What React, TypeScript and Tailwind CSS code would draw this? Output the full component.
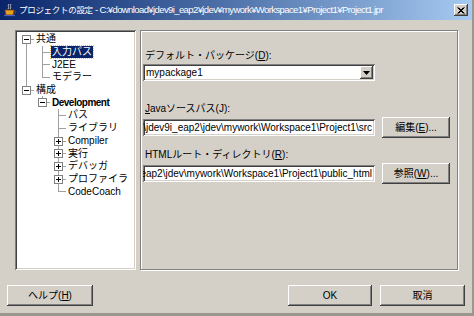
import React from "react";

type TreeNode = {
  label: string;
  level: number;
  box?: "+" | "-";
  bold?: boolean;
  selected?: boolean;
  lines: boolean[];
  first?: boolean;
  last?: boolean;
};

const TREE: TreeNode[] = [
  { label: "共通", level: 0, box: "-", lines: [], first: true },
  { label: "入力パス", level: 1, lines: [true], selected: true },
  { label: "J2EE", level: 1, lines: [true] },
  { label: "モデラー", level: 1, lines: [true], last: true },
  { label: "構成", level: 0, box: "-", lines: [], last: true },
  { label: "Development", level: 1, box: "-", bold: true, lines: [false], last: true },
  { label: "パス", level: 2, lines: [false, false] },
  { label: "ライブラリ", level: 2, lines: [false, false] },
  { label: "Compiler", level: 2, box: "+", lines: [false, false] },
  { label: "実行", level: 2, box: "+", lines: [false, false] },
  { label: "デバッガ", level: 2, box: "+", lines: [false, false] },
  { label: "プロファイラ", level: 2, box: "+", lines: [false, false] },
  { label: "CodeCoach", level: 2, lines: [false, false], last: true },
];

const SUNKEN =
  "shadow-[inset_1px_1px_0_#808080,inset_-1px_-1px_0_#ffffff,inset_2px_2px_0_#404040,inset_-2px_-2px_0_#d4d0c8]";
const RAISED =
  "shadow-[inset_-1px_-1px_0_#404040,inset_1px_1px_0_#ffffff,inset_-2px_-2px_0_#808080,inset_2px_2px_0_#d4d0c8]";

export default function App() {
  return (
    <div
      className="flex h-[316px] w-[474px] flex-col overflow-hidden border-b-[3px] border-r-[2px] border-[#9a978f] bg-[#d4d0c8] text-[10px] text-black"
      style={{ fontFamily: '"Liberation Sans", "Noto Sans CJK JP", sans-serif' }}
    >
      <TitleBar />

      <div className="ml-[15px] mt-[10px] flex h-[240px] gap-[4px]">
        <div className={`w-[121px] bg-white pl-[1px] pt-[3px] ${SUNKEN}`}>
          <div className="pl-[2px]">
            {TREE.map((n) => (
              <TreeRow key={n.label} node={n} />
            ))}
          </div>
        </div>

        <div className="w-[318px] border border-[#808080] px-[2px] pt-[19px] shadow-[inset_1px_1px_0_#ffffff,1px_1px_0_#ffffff]">
          <Label>
            デフォルト・パッケージ(<u>D</u>):
          </Label>
          <div className={`mt-[2px] flex h-[17px] w-[232px] items-center bg-white pl-[3px] pr-[2px] ${SUNKEN}`}>
            <span className="flex-1">mypackage1</span>
            <div className={`flex h-[13px] w-[13px] items-center justify-center bg-[#d4d0c8] ${RAISED}`}>
              <svg width="7" height="4" viewBox="0 0 7 4">
                <path d="M0 0h7L3.5 4z" fill="#000" />
              </svg>
            </div>
          </div>

          <Label className="mt-[22px]">
            <u>J</u>avaソースパス(J):
          </Label>
          <FieldRow
            value="C:\download\jdev9i_eap2\jdev\mywork\Workspace1\Project1\src"
            button={
              <>
                編集(<u>E</u>)...
              </>
            }
          />

          <Label className="mt-[12px]">
            HTMLルート・ディレクトリ(<u>R</u>):
          </Label>
          <FieldRow
            value="C:\download\jdev9i_eap2\jdev\mywork\Workspace1\Project1\public_html"
            button={
              <>
                参照(<u>W</u>)...
              </>
            }
          />
        </div>
      </div>

      <div className="mt-[15px] flex px-[7px]">
        <Button className="w-[86px]">
          ヘルプ(<u>H</u>)
        </Button>
        <div className="flex-1" />
        <Button className="w-[84px]">OK</Button>
        <Button className="ml-[8px] w-[85px]">取消</Button>
      </div>
    </div>
  );
}

function TitleBar() {
  return (
    <div className="flex h-[20px] items-center bg-gradient-to-r from-[#0a246a] to-[#a6caf0] pl-[3px] pr-[4px] text-white">
      <svg width="14" height="14" viewBox="0 0 14 14" className="shrink-0">
        <path d="M6 1c-2 2 1 3-1 5M8 1c-2 2 1 3-1 5" stroke="#c0c0c0" fill="none" />
        <path d="M2 7h9l-1 5H3z" fill="#e8a020" stroke="#7a4a00" strokeWidth="0.8" />
        <path d="M11 8h1.5v2H10.5" stroke="#7a4a00" fill="none" strokeWidth="0.8" />
        <path d="M1 12.5h11" stroke="#5060c0" strokeWidth="1.2" />
      </svg>
      <span className="ml-[2px] whitespace-nowrap text-[8.5px] tracking-[-0.3px]">
        プロジェクトの設定{" "}
        <span className="text-[9.5px] tracking-[-0.6px]">
          - C:¥download¥jdev9i_eap2¥jdev¥mywork¥Workspace1¥Project1¥Project1.jpr
        </span>
      </span>
      <div className="flex-1" />
      <div className={`flex h-[12px] w-[14px] shrink-0 items-center justify-center bg-[#d4d0c8] ${RAISED}`}>
        <svg width="8" height="7" viewBox="0 0 8 7">
          <path d="M0.5 0.5l6 6M6.5 0.5l-6 6M1.5 0.5l6 6M7.5 0.5l-6 6" stroke="#000" strokeWidth="1" />
        </svg>
      </div>
    </div>
  );
}

function TreeRow({ node }: { node: TreeNode }) {
  const cells = [];
  for (let i = 0; i < node.level; i++) {
    cells.push(
      <div key={i} className="relative h-full w-[16px] shrink-0">
        {node.lines[i] && <span className="absolute bottom-0 left-[8px] top-0 w-px bg-[#a0a0a0]" />}
      </div>
    );
  }
  cells.push(
    <div key="self" className="relative h-full w-[16px] shrink-0">
      {!node.first && <span className="absolute left-[8px] top-0 h-[6px] w-px bg-[#a0a0a0]" />}
      {!node.last && <span className="absolute bottom-0 left-[8px] top-[6px] w-px bg-[#a0a0a0]" />}
      <span className="absolute left-[8px] right-0 top-[6px] h-px bg-[#a0a0a0]" />
      {node.box && (
        <span className="absolute left-[4px] top-[2px] flex h-[9px] w-[9px] items-center justify-center border border-[#808080] bg-white">
          <span className="absolute h-px w-[5px] bg-black" />
          {node.box === "+" && <span className="absolute h-[5px] w-px bg-black" />}
        </span>
      )}
    </div>
  );
  return (
    <div className="flex h-[12.7px] items-center">
      {cells}
      <span
        className={`ml-[1px] whitespace-nowrap px-[1px] leading-[12px] ${node.bold ? "font-bold tracking-[-0.5px]" : ""} ${
          node.selected ? "bg-[#0a246a] text-white outline outline-1 outline-dotted outline-[#f0c060]" : ""
        }`}
      >
        {node.label}
      </span>
    </div>
  );
}

function Label({ children, className = "" }: { children: React.ReactNode; className?: string }) {
  return <div className={`ml-[2px] h-[12px] leading-[12px] ${className}`}>{children}</div>;
}

function FieldRow({ value, button }: { value: string; button: React.ReactNode }) {
  return (
    <div className="mt-[2px] flex h-[20px] items-center gap-[7px]">
      <div className={`flex h-[17px] w-[232px] items-center justify-end overflow-hidden bg-white pl-[2px] pr-[3px] ${SUNKEN}`}>
        <span className="whitespace-nowrap">{value}</span>
      </div>
      <Button className="w-[68px]">{button}</Button>
    </div>
  );
}

function Button({ children, className = "" }: { children: React.ReactNode; className?: string }) {
  return (
    <button className={`flex h-[21px] items-center justify-center bg-[#d4d0c8] ${RAISED} ${className}`}>
      <span>{children}</span>
    </button>
  );
}
